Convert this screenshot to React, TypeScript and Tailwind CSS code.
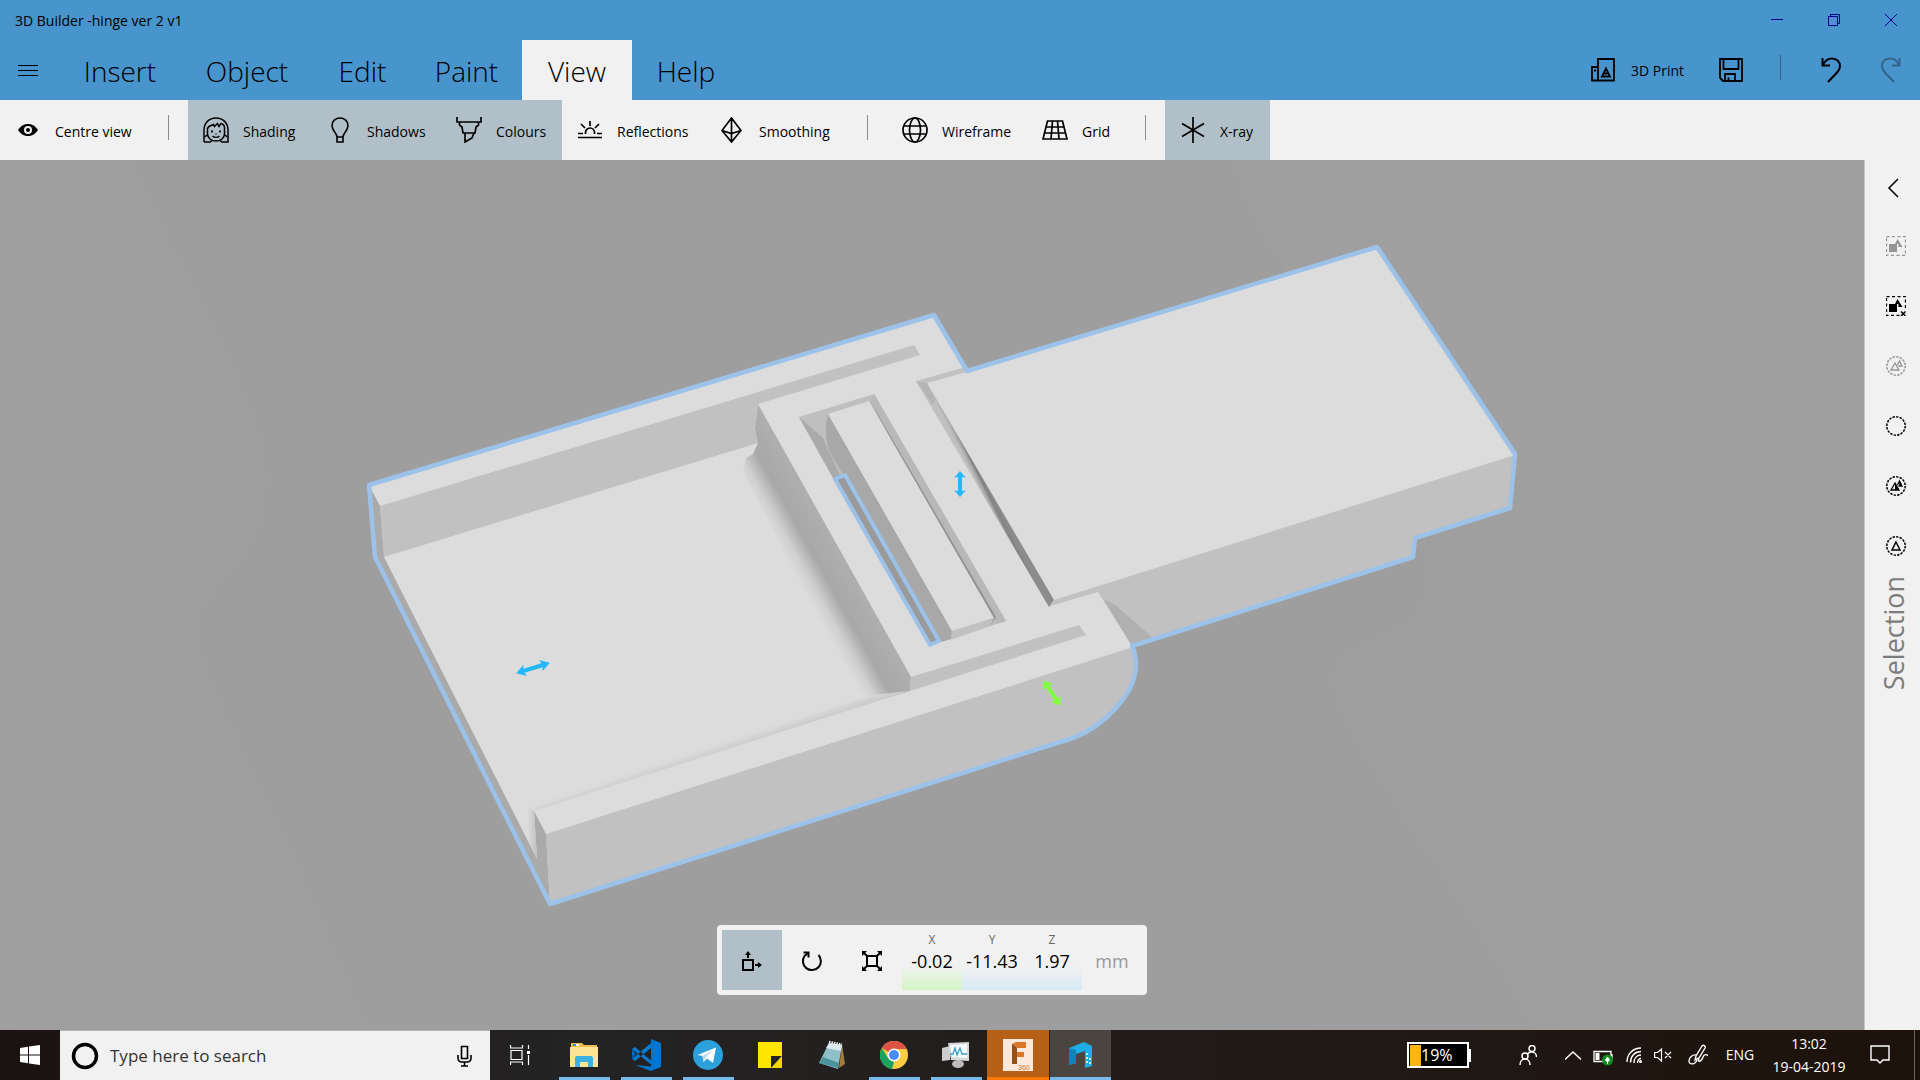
import { useState } from "react"
import type { ReactNode } from "react"

const MENU = [
    { name: "Insert", width: "w-[120px]" },
    { name: "Object", width: "w-[134px]" },
    { name: "Edit", width: "w-[97px]" },
    { name: "Paint", width: "w-[111px]" },
    { name: "View", width: "w-[110px]" },
    { name: "Help", width: "w-[108px]" },
]

const TOOL_GROUPS = [
    [{ name: "Centre view", width: "w-[148px]", icon: <EyeIcon /> }],
    [
        { name: "Shading", width: "w-[124px]", icon: <ShadingIcon /> },
        { name: "Shadows", width: "w-[129px]", icon: <BulbIcon /> },
        { name: "Colours", width: "w-[121px]", icon: <BrushIcon /> },
        { name: "Reflections", width: "w-[142px]", icon: <ReflectionsIcon /> },
        { name: "Smoothing", width: "w-[143px]", icon: <SmoothingIcon /> },
    ],
    [
        { name: "Wireframe", width: "w-[140px]", icon: <GlobeIcon /> },
        { name: "Grid", width: "w-[98px]", icon: <GridIcon /> },
    ],
    [{ name: "X-ray", width: "w-[105px]", icon: <XrayIcon /> }],
]

const AXES = [
    { name: "X", value: "-0.02", color: "to-[#d3f5c3]" },
    { name: "Y", value: "-11.43", color: "to-[#d6e9f4]" },
    { name: "Z", value: "1.97", color: "to-[#d6e9f4]" },
]

const APPS = [
    { name: "File Explorer", icon: <ExplorerIcon />, state: "open" },
    { name: "Visual Studio Code", icon: <CodeIcon />, state: "open" },
    { name: "Telegram", icon: <TelegramIcon />, state: "open" },
    { name: "Sticky Notes", icon: <StickyIcon />, state: "" },
    { name: "Notepad", icon: <NotepadIcon />, state: "" },
    { name: "Chrome", icon: <ChromeIcon />, state: "open" },
    { name: "Task Manager", icon: <MonitorIcon />, state: "open" },
    { name: "Fusion 360", icon: <FusionIcon />, state: "alert" },
    { name: "3D Builder", icon: <BuilderIcon />, state: "active" },
]

function Line({ w, h, sw = 2, children }: { w: number; h: number; sw?: number; children: ReactNode }) {
    return (
        <svg width={w} height={h} viewBox={`0 0 ${w} ${h}`} fill="none" stroke="currentColor" strokeWidth={sw} aria-hidden="true">
            {children}
        </svg>
    )
}

function EyeIcon() {
    return (
        <Line w={20} h={14}>
            <path d="M0 7C3 2.500 6.500 1 10 1s7 1.500 10 6c-3 4.500-6.500 6-10 6S3 11.500 0 7z" fill="currentColor" stroke="none" />
            <circle cx="10" cy="7" r="4" fill="#f1f1f1" stroke="none" />
            <circle cx="10" cy="7" r="2" fill="currentColor" stroke="none" />
        </Line>
    )
}

function ShadingIcon() {
    return (
        <Line w={26} h={26} sw={1.5}>
            <path d="M1 25V13C1 6 6 1 13 1s12 5 12 12v12h-6l-2-1.500M1 25h6l2-1.500" />
            <path d="M4.500 11v6c0 4 4 7 8.500 7s8.500-3 8.500-7v-6c0-2-1-4-3.500-4.500l-2 3-1.500-3-3 3-1-2C8 9 4.500 9 4.500 12z" />
            <path d="M1.500 20L5 17.500M24.500 20L21 17.500M9.500 19c2 1.800 5 1.800 7 0M12.500 17h1" />
            <path d="M9 13.500v2M17 13.500v2" strokeWidth="1.800" />
        </Line>
    )
}

function BulbIcon() {
    return (
        <Line w={18} h={26} sw={1.6}>
            <path d="M6 20c0-4-5-6-5-11.500C1 4 4.500 1 9 1s8 3 8 7.500C17 14 12 16 12 20v5H6zM6 20h6" />
        </Line>
    )
}

function BrushIcon() {
    return (
        <Line w={26} h={26} sw={1.7}>
            <path d="M1 0v5h24V0M3.500 5v3l2.500 2 1 6h12l1-6 2.500-2V5M9 16v9l7-4 2-5" />
        </Line>
    )
}

function ReflectionsIcon() {
    return (
        <Line w={24} h={18} sw={1.7}>
            <path d="M0 16.500h24M0 12.500h5M19 12.500h5" />
            <path d="M7.500 13v-1.500a4.500 4.500 0 019 0V13M12 0v5M3 3l4 4M21 3l-4 4" />
        </Line>
    )
}

function SmoothingIcon() {
    return (
        <Line w={21} h={26} sw={1.7}>
            <path d="M10.500 1L20 13.500 10.500 25 1 13.500zM1 13.500l9.500 3 9.500-3M10.500 1v24" />
        </Line>
    )
}

function GlobeIcon() {
    return (
        <Line w={26} h={26} sw={1.7}>
            <circle cx="13" cy="13" r="12" />
            <ellipse cx="13" cy="13" rx="5.500" ry="12" />
            <path d="M2 9h22M2 17h22" />
        </Line>
    )
}

function GridIcon() {
    return (
        <Line w={26} h={20} sw={1.7}>
            <path d="M5.500 1h15L25 19H1zM4 7h18M2.500 13h21M10.500 1L9 19M15.500 1L17 19" />
        </Line>
    )
}

function XrayIcon() {
    return (
        <Line w={24} h={26} sw={1.7}>
            <path d="M12 0v26M1 6.500l22 13M23 6.500L1 19.500" />
        </Line>
    )
}

function PrintIcon() {
    return (
        <Line w={24} h={24} sw={1.8}>
            <path d="M7 22.500V1h16v21.500zM7 9H1v13.500h6M3 12.500h2M11 18.500l4-8 4 8zM13.500 15.500h3" />
        </Line>
    )
}

function SaveIcon() {
    return (
        <Line w={24} h={24} sw={1.8}>
            <path d="M1 1h22v22H4l-3-3zM4.500 1v10h15V1M6 23v-7h10v7M9.500 23v-3.500" />
        </Line>
    )
}

function UndoIcon() {
    return (
        <Line w={20} h={26} sw={2}>
            <path d="M1.500 1v7.500H9M2 8c2-4.500 5-6.500 9-6.500 5 0 8 3.500 8 7.500 0 3-1 4.500-3 6.500L7 25" />
        </Line>
    )
}

function SelectShapesIcon({ cross }: { cross?: boolean }) {
    return (
        <Line w={20} h={20}>
            <path d="M.5.500h19v19H.5z" strokeWidth="1.300" strokeDasharray="3 2.500" />
            <path d="M11.500 3l5 8h-4V8H9z" fill="currentColor" stroke="none" />
            <path d="M3 8h8v8H3z" fill="currentColor" stroke="none" />
            {cross && <path d="M14 14h6v6h-6z" fill="#f1f1f1" stroke="none" />}
            {cross && <path d="M15 15.500l4.500 4.500M19.500 15.500L15 20" strokeWidth="1.500" />}
        </Line>
    )
}

function SelectCircleIcon({ shape }: { shape?: "outline" | "filled" | "single" }) {
    return (
        <Line w={20} h={20}>
            <circle cx="10" cy="10" r="9.200" strokeWidth="1.500" strokeDasharray="2.400 1.200" />
            {shape === "single" && <path d="M10 6l4 8H6z" strokeWidth="1.500" />}
            {(shape === "outline" || shape === "filled") && (
                <path d="M5 14l4-7 4 7zM11.500 9L13.500 5l2.500 5h-3.500" strokeWidth="1.300" />
            )}
            {shape === "filled" && <path d="M9 7l4 7H9zM13.500 5l2.500 5h-3z" fill="currentColor" stroke="none" />}
        </Line>
    )
}

function MoveIcon() {
    return (
        <Line w={20} h={20}>
            <path d="M1 9h10v10H1zM6 7V3M13 14h4" />
            <path d="M3 4l3-4 3 4zM16 11l4 3-4 3z" fill="currentColor" stroke="none" />
        </Line>
    )
}

function RotateIcon() {
    return (
        <Line w={22} h={22}>
            <path d="M17.500 5A9 9 0 113.500 6L6.500 3.500" />
            <path d="M2.500 2.500h5v5" />
        </Line>
    )
}

function ScaleIcon() {
    return (
        <Line w={20} h={20}>
            <path d="M5 5h10v10H5zM1 1l4 4M19 1l-4 4M1 19l4-4M19 19l-4-4" />
            <path d="M0 0h5L0 5zM20 0v5l-5-5zM0 20v-5l5 5zM20 20h-5l5-5z" fill="currentColor" stroke="none" />
        </Line>
    )
}

function ExplorerIcon() {
    return (
        <svg width="28" height="26" viewBox="0 0 28 26" aria-hidden="true">
            <path d="M1 1h11l2 2h13v20H1z" fill="#e9bd4e" />
            <path d="M0 5h28v20H0z" fill="#ffe394" />
            <path d="M3 2h6v2H3z" fill="#fff" />
            <path d="M3 2h3v2H3z" fill="#2d8fd0" />
            <path d="M5 25V16q0-2 2-2h14q2 0 2 2v9h-5v-5h-8v5z" fill="#3eb1e4" />
        </svg>
    )
}

function CodeIcon() {
    return (
        <svg width="30" height="32" viewBox="0 0 30 32" aria-hidden="true">
            <path d="M20 0l10 4v24l-10 4L4 26l16 1.500z" fill="#0076d1" />
            <path d="M1 10l3-2 16 13.500v4zM1 20l3 2L20 9V4z" fill="#0a7bd3" />
            <path d="M1 10v10l4-5z" fill="#0064b5" />
        </svg>
    )
}

function TelegramIcon() {
    return (
        <svg width="30" height="30" viewBox="0 0 30 30" aria-hidden="true">
            <circle cx="15" cy="15" r="15" fill="#2ca0da" />
            <path d="M4.500 15L23 7.500 20 23l-6-4.500-3.500 3.500-1-6z" fill="#fff" />
            <path d="M9.500 16L20 10l-8 8-1.500 4z" fill="#b8d8ec" />
        </svg>
    )
}

function StickyIcon() {
    return (
        <svg width="24" height="26" viewBox="0 0 24 26" aria-hidden="true">
            <path d="M0 0h24v14L13 26H0z" fill="#ffe500" />
            <path d="M13 14h11L13 26z" fill="#222" />
            <path d="M24 14v12H13z" fill="#f5d800" />
        </svg>
    )
}

function NotepadIcon() {
    return (
        <svg width="28" height="30" viewBox="0 0 28 30" aria-hidden="true">
            <path d="M24 4l3 20-6 4z" fill="#a17c3c" />
            <path d="M11 3l13 2-4 24L1 23z" fill="#8fc0c8" />
            <path d="M11 3l13 2-1 6-15-3z" fill="#dcebed" />
            <path d="M1 23l19 5 1-5L5 17z" fill="#4d939d" />
            <path d="M11 2l13 2.500" stroke="#eee" strokeWidth="2.500" strokeDasharray="1.500 1" />
        </svg>
    )
}

function ChromeIcon() {
    return (
        <svg width="28" height="30" viewBox="0 0 28 30" aria-hidden="true">
            <circle cx="14" cy="15" r="14" fill="#ffcd41" />
            <path d="M14 15L1.800 8A14 14 0 0126.500 9H14z" fill="#de5346" />
            <path d="M1.800 8L8 18l6 4-2 7A14 14 0 011.800 8z" fill="#1aa05f" />
            <circle cx="14" cy="15" r="6.500" fill="#fff" />
            <circle cx="14" cy="15" r="5" fill="#4c8bf5" />
        </svg>
    )
}

function MonitorIcon() {
    return (
        <svg width="28" height="28" viewBox="0 0 28 28" aria-hidden="true">
            <path d="M0 7l8-2v14l-8 1z" fill="#ccc" />
            <path d="M6 2l21-1v19l-18-1z" fill="#d6d6d6" />
            <path d="M8 4l17-1v14L10 16z" fill="#f5fafc" />
            <path d="M8 13h3l2-6 2 7 3-7 2 6h5" fill="none" stroke="#3aa0c9" strokeWidth="1.300" />
            <ellipse cx="16" cy="23" rx="6" ry="4" fill="#bdbdbd" />
        </svg>
    )
}

function FusionIcon() {
    return (
        <svg width="30" height="32" viewBox="0 0 30 32" aria-hidden="true">
            <path d="M0 0h30v32H0z" fill="#fbe9dc" />
            <path d="M9 5l4-2h10v6H14v4h7v5h-7v7H9z" fill="#d9782b" />
            <path d="M9 5l5 4v16H9z" fill="#96501c" />
            <text x="15" y="31" fill="#d9782b" className="font-['Liberation_Sans'] text-[7px]">360</text>
        </svg>
    )
}

function BuilderIcon() {
    return (
        <svg width="24" height="26" viewBox="0 0 24 26" aria-hidden="true">
            <path d="M0 6L15 0l8 4v20l-7 2V9l-9 3v9l-7 2z" fill="#1cade4" />
            <path d="M0 6l7 2v13l-7 2z" fill="#0b85b8" />
            <path d="M18 11v12M21 16v6" stroke="#fff" strokeWidth="1.500" strokeDasharray="2 2" />
        </svg>
    )
}

function Arrow({ place, color }: { place: string; color: string }) {
    return <path transform={place} fill={color} d="M-13 0L-6-6-7-2H7L6-6 13 0 6 6 7 2H-7L-6 6z" />
}

function Model() {
    return (
        <svg className="absolute inset-0 h-full w-full" viewBox="0 160 1864 870" preserveAspectRatio="xMidYMid slice" role="img" aria-label="Hinge model">
            <defs>
                <linearGradient id="barShade" gradientUnits="userSpaceOnUse" x1="790" y1="566" x2="835" y2="541">
                    <stop offset="0" stopColor="#dcdcdc" />
                    <stop offset="0.200" stopColor="#d0d0d0" />
                    <stop offset="0.500" stopColor="#a8a8a8" />
                    <stop offset="1" stopColor="#afafaf" />
                </linearGradient>
                <linearGradient id="wallShade" gradientUnits="userSpaceOnUse" x1="700" y1="750" x2="703" y2="759">
                    <stop offset="0" stopColor="#dcdcdc" />
                    <stop offset="1" stopColor="#cacaca" />
                </linearGradient>
                <linearGradient id="endShade" gradientUnits="userSpaceOnUse" x1="527" y1="830" x2="536" y2="830">
                    <stop offset="0" stopColor="#dcdcdc" />
                    <stop offset="1" stopColor="#c4c4c4" />
                </linearGradient>
                <linearGradient id="gapShade" gradientUnits="userSpaceOnUse" x1="982" y1="494" x2="990" y2="490">
                    <stop offset="0" stopColor="#c0c0c0" />
                    <stop offset="0.350" stopColor="#a8a8a8" />
                    <stop offset="0.600" stopColor="#828282" />
                    <stop offset="1" stopColor="#8c8c8c" />
                </linearGradient>
            </defs>

            {/* faint backdrop waves */}
            <path d="M0 160h130c50 120 140 250 135 330s-80 100-70 150 120 250 170 390H0z" fill="#9f9f9f" />
            <path d="M1230 160h634v870h-330c-60-130-200-300-200-350s90-30 95-100-120-250-199-420z" fill="#9f9f9f" />

            {/* silhouette and top faces */}
            <path
                d="M369 485L934 315 967 371 1377 247 1515 454 1510 508 1415 538 1413 557 1132 646C1140 664 1136 684 1120 703 1104 723 1084 736 1060 742L550 904 375 557z"
                fill="#dcdcdc"
            />

            {/* back wall */}
            <path d="M380 506L914 345 920 355 758 404 755 425 758 443 384 557z" fill="#c1c1c1" />
            <path d="M369 485L380 506 384 557 537 859 534 811 546 834 550 904 375 557z" fill="#aaa" />

            {/* cross bar side with its soft shadow on the floor */}
            <path d="M758 404L911 677 910 691 860 706 743 470 746 458 753 454 758 443 755 428z" fill="url(#barShade)" />
            <path d="M534 811L531 803 872 695 909 691z" fill="url(#wallShade)" />
            <path d="M534 811L527 806 529 842 537 859z" fill="url(#endShade)" />

            {/* front wall */}
            <path d="M911 677L1079 625 1086 635 910 691z" fill="#c1c1c1" />
            <path d="M546 834L1130 648C1140 664 1136 684 1120 703 1104 723 1084 736 1060 742L550 904z" fill="#c1c1c1" />

            {/* middle slot and the pin block */}
            <path d="M799 417L874 394 1006 621 929 646z" fill="#bfbfbf" />
            <path d="M799 417L823 438 828 450 845 474 834 480z" fill="#aaa" />
            <path d="M823 438L845 475 840 476z" fill="#bbb" />
            <path d="M874 394L1006 621 996 624 870 402z" fill="#b8b8b8" />
            <path d="M870 401L996 617 990 626z" fill="#929292" />
            <path d="M828 414C825 425 825 438 829 450L843 474 941 642 951 639 952 631z" fill="#a8a8a8" />
            <path d="M828 414L869 401 994 618 952 631z" fill="#dcdcdc" />
            <path d="M952 631L994 618 990 626 951 640z" fill="#c1c1c1" />
            <path d="M835 479L845 475 939 641 930 645z" fill="#9a9a9a" stroke="#9cc2ea" strokeWidth="4" strokeLinejoin="round" />

            {/* groove between the two halves */}
            <path d="M916 381L962 368 967 372 927 383z" fill="#c1c1c1" />
            <path d="M916 381L927 383 1054 600 1049 607z" fill="url(#gapShade)" />
            <path d="M916 381L927 383 935 400 933 405z" fill="#b4b4b4" />

            {/* right plate */}
            <path d="M1054 600L1515 455 1510 508 1415 538 1413 557 1132 646 1098 592 1050 606z" fill="#c1c1c1" />
            <path d="M1104 600L1114 604 1152 637 1132 646z" fill="#b0b0b0" />

            <path
                d="M369 485L934 315 967 371 1377 247 1515 454 1510 508 1415 538 1413 557 1132 646C1140 664 1136 684 1120 703 1104 723 1084 736 1060 742L550 904 375 557z"
                fill="none"
                stroke="#9cc2ea"
                strokeWidth="4.500"
                strokeLinejoin="round"
            />

            <Arrow place="translate(960 484) rotate(90)" color="#22b8fc" />
            <Arrow place="translate(533 668) rotate(-17) scale(1.350 1)" color="#22b8fc" />
            <Arrow place="translate(1052 693) rotate(57) scale(1.150 1)" color="#80ff3c" />
        </svg>
    )
}

function Separator() {
    return <div className="mt-[15px] h-[25px] w-px shrink-0 bg-[#8c8c8c]" />
}

function TitleBar() {
    return (
        <div className="flex h-10 items-center justify-between bg-[#4894cd] pl-[15px]">
            <span className="pt-[2px] text-sm">3D Builder -hinge ver 2 v1</span>
            <div className="flex text-[#00008b]">
                <button aria-label="Minimise" className="flex h-10 w-[57px] items-center justify-center">
                    <Line w={12} h={12} sw={1}><path d="M0 5.500h12" /></Line>
                </button>
                <button aria-label="Restore" className="flex h-10 w-[57px] items-center justify-center">
                    <Line w={12} h={12} sw={1}><path d="M.5 2.500h9v9h-9zM2.500 2.500v-2h9v9h-2" /></Line>
                </button>
                <button aria-label="Close" className="flex h-10 w-[58px] items-center justify-center">
                    <Line w={12} h={12} sw={1}><path d="M0 0l12 12M12 0L0 12" /></Line>
                </button>
            </div>
        </div>
    )
}

function MenuBar() {
    const [tab, setTab] = useState("View")

    return (
        <nav className="flex h-[60px] items-stretch bg-[#4894cd]">
            <button aria-label="Menu" className="flex w-[60px] items-center pt-[2px] pl-[18px]">
                <Line w={20} h={12} sw={1}><path d="M0 .5h20M0 5.500h20M0 10.500h20" /></Line>
            </button>
            {MENU.map(m => (
                <button
                    key={m.name}
                    onClick={() => setTab(m.name)}
                    className={`${m.width} pt-[2px] text-[28px] leading-8 font-light ${tab === m.name ? "bg-[#f1f1f1]" : ""}`}
                >
                    {m.name}
                </button>
            ))}
            <div className="ml-auto flex">
                <button className="flex w-[114px] items-center gap-4 text-sm">
                    <PrintIcon /> <span className="pt-[2px]">3D Print</span>
                </button>
                <button aria-label="Save" className="flex w-[75px] items-center pl-[14px]"><SaveIcon /></button>
                <div className="mt-[15px] h-[25px] w-px bg-[#35648a]" />
                <button aria-label="Undo" className="flex w-[60px] items-center justify-end"><UndoIcon /></button>
                <button aria-label="Redo" className="mr-[19px] flex w-[60px] items-center justify-end text-[#35648a]">
                    <span className="-scale-x-100"><UndoIcon /></span>
                </button>
            </div>
        </nav>
    )
}

function Toolbar() {
    const [on, setOn] = useState(["Shading", "Shadows", "Colours", "X-ray"])

    const toggle = (name: string) => setOn(on.includes(name) ? on.filter(n => n !== name) : [...on, name])

    return (
        <div className="flex h-[60px] bg-[#f1f1f1]">
            {TOOL_GROUPS.map((group, i) => (
                <div key={i} className="flex">
                    {i > 0 && <div className="flex w-10 justify-center"><Separator /></div>}
                    {group.map(t => (
                        <button
                            key={t.name}
                            onClick={() => toggle(t.name)}
                            className={`${t.width} flex items-center text-sm ${on.includes(t.name) ? "bg-[#b1c0c8]" : ""}`}
                        >
                            <span className="flex w-[55px] shrink-0 justify-center">{t.icon}</span>
                            <span className="pt-1 whitespace-nowrap">{t.name}</span>
                        </button>
                    ))}
                </div>
            ))}
        </div>
    )
}

function SelectionPanel() {
    return (
        <aside className="flex w-14 shrink-0 flex-col border-l border-[#c8c8c8] bg-[#f1f1f1] pl-[6px]">
            <button aria-label="Expand" className="flex h-14 items-center pl-[15px]">
                <Line w={14} h={20} sw={1.5}><path d="M12 1L3 10l9 9" /></Line>
            </button>
            <button aria-label="Select all" className="flex h-[60px] items-center justify-center text-[#959595]"><SelectShapesIcon /></button>
            <button aria-label="Clear selection" className="flex h-[60px] items-center justify-center"><SelectShapesIcon cross /></button>
            <button aria-label="Group" className="flex h-[60px] items-center justify-center text-[#959595]"><SelectCircleIcon shape="outline" /></button>
            <button aria-label="Select none" className="flex h-[60px] items-center justify-center"><SelectCircleIcon /></button>
            <button aria-label="Select similar" className="flex h-[60px] items-center justify-center"><SelectCircleIcon shape="filled" /></button>
            <button aria-label="Select one" className="flex h-[60px] items-center justify-center"><SelectCircleIcon shape="single" /></button>
            <h2 className="mr-1 rotate-180 self-center text-[27px] leading-9 text-[#7c7c7c] [writing-mode:vertical-rl]">Selection</h2>
        </aside>
    )
}

function TransformBar() {
    return (
        <div className="absolute bottom-[35px] left-1/2 flex h-[70px] w-[430px] -translate-x-1/2 rounded-sm bg-[#f1f1f1] p-[5px]">
            <button aria-label="Move" className="flex w-[60px] items-center justify-center bg-[#b1c0c8] pt-[2px]"><MoveIcon /></button>
            <button aria-label="Rotate" className="flex w-[60px] items-center justify-center pt-[2px]"><RotateIcon /></button>
            <button aria-label="Scale" className="flex w-[60px] items-center justify-center pt-[2px]"><ScaleIcon /></button>
            {AXES.map(a => (
                <label key={a.name} className={`flex w-[60px] flex-col items-center bg-linear-to-b from-[#f1f1f1] from-60% pt-px ${a.color}`}>
                    <span className="text-xs leading-[18px] text-[#666]">{a.name}</span>
                    <input defaultValue={a.value} className="w-full bg-transparent text-center text-[18px] leading-6" />
                </label>
            ))}
            <span className="flex flex-1 items-center justify-center pt-[2px] text-lg text-[#999]">mm</span>
        </div>
    )
}

function Taskbar() {
    return (
        <footer className="flex h-[50px] shrink-0 bg-linear-to-r from-[#1a1210] via-[#242324] via-30% to-[#1d120b] text-white">
            <button aria-label="Start" className="flex w-[60px] items-center justify-center">
                <svg width="20" height="20" viewBox="0 0 20 20" fill="#fff" aria-hidden="true">
                    <path d="M0 3l8-1.200V9.500H0zM9 1.600L20 0v9.500H9zM0 10.500h8v7.700L0 17zM9 10.500h11V20L9 18.400z" />
                </svg>
            </button>
            <label className="flex w-[430px] items-center border-t border-[#b4b4b4] bg-[#f1f1f1] pr-[18px] pl-[11px] text-black">
                <svg width="28" height="28" viewBox="0 0 28 28" aria-hidden="true">
                    <circle cx="14" cy="14" r="11.500" fill="none" stroke="#000" strokeWidth="3.500" />
                </svg>
                <input aria-label="Search" placeholder="Type here to search" className="ml-[11px] flex-1 text-[17px] placeholder:text-[#333]" />
                <Line w={15} h={22} sw={1.6}>
                    <path d="M4.500 1.500h6v12h-6zM1 10v3q0 4 4 4h5q4 0 4-4v-3M7.500 17v4M4 21h7" />
                </Line>
            </label>
            <button aria-label="Task view" className="flex w-[63px] items-center pl-5">
                <Line w={20} h={20} sw={1.2}>
                    <path d="M1 5.500h11v9H1zM.5 0v3h12V0M.5 20v-3h12v3M18.500 0v4M18.500 10v10" />
                    <path d="M17 6h3v3h-3z" fill="#fff" stroke="none" />
                </Line>
            </button>
            {APPS.map(a => (
                <button
                    key={a.name}
                    aria-label={a.name}
                    className={`flex w-[62px] flex-col items-center ${a.state === "alert" ? "bg-[#b65f17]" : ""} ${a.state === "active" ? "border-l border-[#222] bg-[#4a4541]" : ""}`}
                >
                    <span className="flex flex-1 items-center pt-[2px]">{a.icon}</span>
                    {a.state === "open" && <span className="h-[3px] w-[51px] bg-[#76b9ed]" />}
                    {a.state === "alert" && <span className="h-[3px] w-full bg-[#ff7600]" />}
                    {a.state === "active" && <span className="h-[3px] w-full bg-[#76b9ed]" />}
                    {a.state === "" && <span className="h-[3px]" />}
                </button>
            ))}
            <div className="ml-auto flex items-center">
                <div className="flex h-[26px] w-[62px] items-center border-2 border-white bg-black">
                    <span className="ml-px h-[21px] w-[11px] bg-[#ffb419]" />
                    <span className="text-base">19%</span>
                </div>
                <span className="h-[13px] w-[2px] bg-white" />
                <button aria-label="People" className="ml-12">
                    <Line w={18} h={20} sw={1.5}>
                        <circle cx="6" cy="11" r="3" /><circle cx="13" cy="3.500" r="3" />
                        <path d="M1 20c0-8 10-8 10 0M8.500 9c2-3 9-3 9 3" />
                    </Line>
                </button>
                <button aria-label="Hidden icons" className="ml-7">
                    <Line w={16} h={9} sw={1.4}><path d="M0 8.500L8 1l8 7.500" /></Line>
                </button>
                <button aria-label="Battery" className="ml-3 pt-1">
                    <Line w={21} h={17} sw={1.3}>
                        <path d="M1 2.500h17v10H1zM19 5v5" />
                        <path d="M2.500 4h4v7h-4z" fill="#fff" stroke="none" />
                        <circle cx="14.500" cy="11" r="5.500" fill="#0f8a1e" stroke="none" />
                        <path d="M14.500 8l2 3-2 2-2-2zM14.500 12v3" fill="#fff" strokeWidth="1" />
                    </Line>
                </button>
                <button aria-label="Network" className="ml-3">
                    <Line w={16} h={16} sw={1.4}>
                        <path d="M1 15C1 7 7 1 15 1M4.500 15.500C4.500 9 9 4.500 15 4.500M8 16c0-5 3-8 7-8M11.500 16c0-3 1.500-4.500 3.500-4.500" />
                        <circle cx="14.500" cy="14.500" r="1.500" fill="#fff" stroke="none" />
                    </Line>
                </button>
                <button aria-label="Volume" className="ml-3">
                    <Line w={18} h={14} sw={1.2}><path d="M.6 4.500h3L7.500 1v12L3.600 9.500h-3zM11 4l6 6M17 4l-6 6" /></Line>
                </button>
                <button aria-label="Pen" className="ml-4">
                    <Line w={20} h={22} sw={1.4}>
                        <path d="M7 16l1-4 6-10c1-1.500 4 0 3 2l-6 10zM9 11c-5-1-8 3-8 6 0 4 6 4 8-1M11 14c-2 6 3 3 4-1 1-3 4-3 5-1" />
                    </Line>
                </button>
                <button className="ml-[17px] w-[30px] text-sm">ENG</button>
                <div className="ml-[7px] w-[94px] text-center text-sm leading-[23px]">
                    <div>13:02</div>
                    <div>19-04-2019</div>
                </div>
                <button aria-label="Notifications" className="mr-6 ml-[14px]">
                    <Line w={20} h={20} sw={1.4}><path d="M1 1h18v14h-6l-3 3-3-3H1z" /></Line>
                </button>
                <span className="mr-[5px] h-[50px] w-px bg-[#6a625c]" />
            </div>
        </footer>
    )
}

export default function App() {
    return (
        <div className="flex h-screen flex-col overflow-hidden font-['Open_Sans',sans-serif] text-black">
            <TitleBar />
            <MenuBar />
            <Toolbar />
            <main className="flex min-h-0 flex-1">
                <div className="relative flex-1 overflow-hidden bg-[#9e9e9e]">
                    <Model />
                    <TransformBar />
                </div>
                <SelectionPanel />
            </main>
            <Taskbar />
        </div>
    )
}
